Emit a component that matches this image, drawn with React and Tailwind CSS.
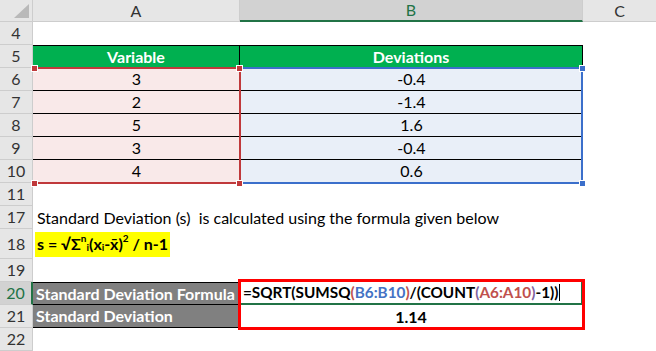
import React from 'react'

const hdr = 'w-[33px] shrink-0 flex items-center justify-center bg-[#e6e6e6] border-r border-b border-[#cdcdcd] text-[#333] text-[16px]'

function Row({ n, h = 'h-[23px]', active, children }) {
  return (
    <div className={`flex ${h}`}>
      <div
        className={
          active
            ? 'w-[33px] shrink-0 flex items-center justify-center bg-[#d2d2d2] border-r-2 border-r-[#217346] border-b border-b-[#cdcdcd] text-[#217346] text-[16px]'
            : hdr
        }
      >
        {n}
      </div>
      {children}
    </div>
  )
}

const Handle = ({ className }) => (
  <div className={`absolute w-[7px] h-[7px] border border-white ${className}`} />
)

const data = [
  ['3', '-0.4'],
  ['2', '-1.4'],
  ['5', '1.6'],
  ['3', '-0.4'],
  ['4', '0.6'],
]

export default function App() {
  return (
    <div className="relative w-[656px] h-[351px] overflow-hidden bg-white text-black font-['Lato',sans-serif] text-[16px]">
      {/* column headers */}
      <div className="flex h-[22px]">
        <div className="w-[33px] shrink-0 bg-[#e6e6e6] border-r border-b border-[#cdcdcd] flex items-start justify-end pt-[4px] pr-[3px]">
          <svg width="15" height="14" viewBox="0 0 15 14">
            <polygon points="15,0 15,14 0,14" fill="#b9b9b9" />
          </svg>
        </div>
        <div className="w-[207px] shrink-0 bg-[#e6e6e6] border-r border-b border-[#cdcdcd] flex items-center justify-center text-[#333]">
          A
        </div>
        <div className="w-[343px] shrink-0 bg-[#d2d2d2] border-r border-[#cdcdcd] border-b-2 border-b-[#217346] flex items-center justify-center text-[#217346]">
          B
        </div>
        <div className="flex-1 bg-[#e6e6e6] border-b border-[#cdcdcd] flex items-center justify-center text-[#333]">
          C
        </div>
      </div>

      <Row n="4" />

      <Row n="5">
        <div className="w-[207px] shrink-0 bg-[#00b050] border-t border-r border-black flex items-center justify-center text-white font-bold">
          Variable
        </div>
        <div className="w-[343px] shrink-0 bg-[#00b050] border-t border-r border-black flex items-center justify-center text-white font-bold">
          Deviations
        </div>
      </Row>

      {data.map(([a, b], i) => (
        <Row key={i} n={String(6 + i)}>
          <div className="w-[207px] shrink-0 bg-[#f9e9e9] border-b border-black flex items-center justify-center">
            {a}
          </div>
          <div className="w-[343px] shrink-0 bg-[#e9eff8] border-b border-black flex items-center justify-center">
            {b}
          </div>
        </Row>
      ))}

      <Row n="11" />

      <Row n="17">
        <div className="pl-[4px] flex items-center whitespace-pre">
          Standard Deviation (s)  is calculated using the formula given below
        </div>
      </Row>

      <Row n="18" h="h-[30px]">
        <div className="pl-[2px] flex items-center">
          <span className="h-[25px] bg-[#ffff00] px-[2px] font-bold flex items-center whitespace-pre leading-none">
            s = √Σ<sup className="text-[10px] -top-[6px]">n</sup>
            <sub className="text-[10px] top-[3px]">i</sub>(x<sub className="text-[10px] top-[3px]">i</sub>-x̄)
            <sup className="text-[10px] -top-[6px]">2</sup> / n-1
          </span>
        </div>
      </Row>

      <Row n="19" />

      <Row n="20" active>
        <div className="w-[207px] shrink-0 bg-[#808080] border-t border-b border-black text-white font-bold flex items-center pl-[3px] whitespace-nowrap">
          Standard Deviation Formula
        </div>
        <div className="w-[343px] shrink-0 border-r-2 border-r-[#217346] border-b-2 border-b-[#217346] flex items-center pl-[3px] font-bold whitespace-nowrap text-[15.3px]">
          =SQRT(SUMSQ<span className="text-[#c0504d]">(</span>
          <span className="text-[#4472c4]">B6:B10</span>
          <span className="text-[#c0504d]">)</span>/(COUNT
          <span className="text-[#8064a2]">(</span>
          <span className="text-[#c0504d]">A6:A10</span>
          <span className="text-[#8064a2]">)</span>-1))
          <span className="ml-[1px] w-px h-[17px] bg-black" />
        </div>
      </Row>

      <Row n="21">
        <div className="w-[207px] shrink-0 bg-[#808080] border-b border-black text-white font-bold flex items-center pl-[3px] whitespace-nowrap">
          Standard Deviation
        </div>
        <div className="w-[343px] shrink-0 border-r border-black flex items-center justify-center font-bold">
          1.14
        </div>
      </Row>

      <Row n="22" />

      {/* range finder outlines */}
      <div className="absolute left-[33px] top-[67px] w-[208px] h-[117px] border-t-2 border-r-2 border-b-2 border-[#c0393b]" />
      <div className="absolute left-[240px] top-[67px] w-[343px] h-[117px] border-t-2 border-r-2 border-b-2 border-[#3b6fcb] border-l-0" />
      <div className="absolute left-[241px] top-[67px] w-[2px] h-[2px] bg-[#3b6fcb]" />
      <Handle className="left-[31px] top-[65px] bg-[#c0393b]" />
      <Handle className="left-[236px] top-[65px] bg-[#c0393b]" />
      <Handle className="left-[31px] top-[180px] bg-[#c0393b]" />
      <Handle className="left-[236px] top-[180px] bg-[#c0393b]" />
      <Handle className="left-[579px] top-[65px] bg-[#3b6fcb]" />
      <Handle className="left-[579px] top-[180px] bg-[#3b6fcb]" />

      {/* highlight box */}
      <div className="absolute left-[238px] top-[279px] w-[347px] h-[51px] border-[3px] border-[#ff0000]" />
    </div>
  )
}
